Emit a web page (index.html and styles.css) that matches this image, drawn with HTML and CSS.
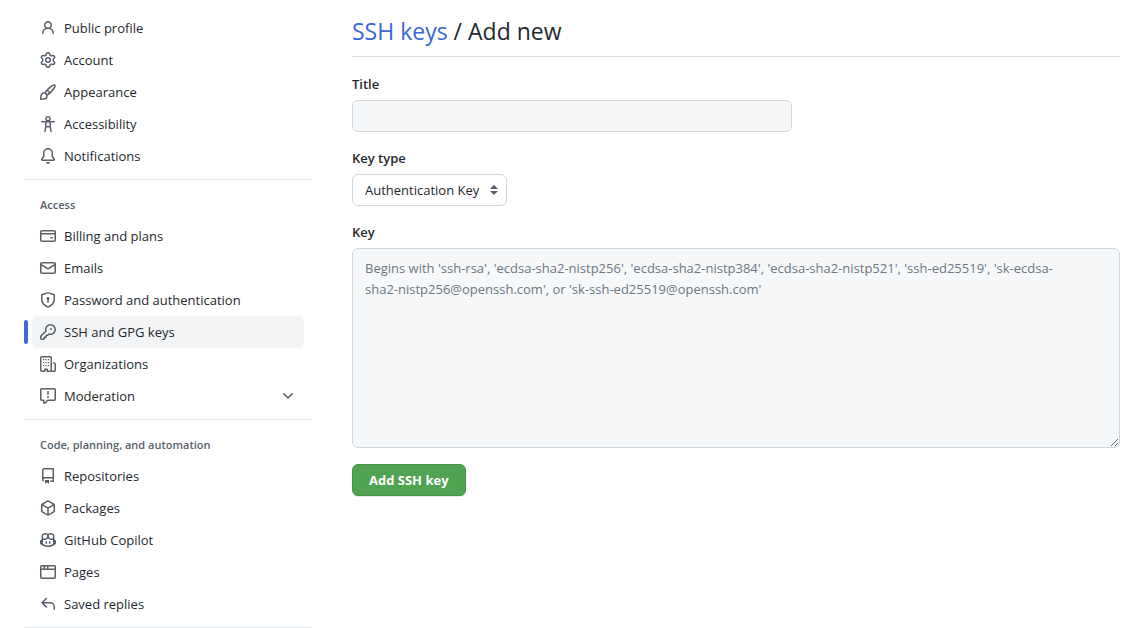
FILE: index.html
```html
<!DOCTYPE html>
<html lang="en">
<head>
    <meta charset="UTF-8">
    <meta name="viewport" content="width=device-width, initial-scale=1.0">
    <title>Add new SSH key</title>
    <link rel="stylesheet" href="styles.css">
</head>
<body>
    <div class="layout">
        <!-- Settings navigation -->
        <nav class="sidebar" aria-label="Settings">
            <ul class="nav-list">
                <li><a class="nav-item" href="#">
                    <svg class="icon" viewBox="0 0 16 16"><path d="M10.561 8.073a6.005 6.005 0 0 1 3.432 5.142.75.75 0 1 1-1.498.07 4.5 4.5 0 0 0-8.99 0 .75.75 0 0 1-1.498-.07 6.004 6.004 0 0 1 3.431-5.142 3.999 3.999 0 1 1 5.123 0ZM10.5 5a2.5 2.5 0 1 0-5 0 2.5 2.5 0 0 0 5 0Z"/></svg>
                    <span>Public profile</span>
                </a></li>
                <li><a class="nav-item" href="#">
                    <svg class="icon" viewBox="0 0 16 16"><path d="M8 0a8.2 8.2 0 0 1 .701.031C9.444.095 9.99.645 10.16 1.29l.288 1.107c.018.066.079.158.212.224.231.114.454.243.668.386.123.082.233.09.299.071l1.103-.303c.644-.176 1.392.021 1.82.63.27.385.506.792.704 1.218.315.675.111 1.422-.364 1.891l-.814.806c-.049.048-.098.147-.088.294.016.257.016.515 0 .772-.01.147.038.246.088.294l.814.806c.475.469.679 1.216.364 1.891a7.977 7.977 0 0 1-.704 1.217c-.428.61-1.176.807-1.82.63l-1.102-.302c-.067-.019-.177-.011-.3.071a5.909 5.909 0 0 1-.668.386c-.133.066-.194.158-.211.224l-.29 1.106c-.168.646-.715 1.196-1.458 1.26a8.006 8.006 0 0 1-1.402 0c-.743-.064-1.289-.614-1.458-1.26l-.289-1.106c-.018-.066-.079-.158-.212-.224a5.738 5.738 0 0 1-.668-.386c-.123-.082-.233-.09-.299-.071l-1.103.303c-.644.176-1.392-.021-1.82-.63a8.12 8.12 0 0 1-.704-1.218c-.315-.675-.111-1.422.363-1.891l.815-.806c.05-.048.098-.147.088-.294a6.214 6.214 0 0 1 0-.772c.01-.147-.038-.246-.088-.294l-.815-.806C.635 6.045.431 5.298.746 4.623a7.92 7.92 0 0 1 .704-1.217c.428-.61 1.176-.807 1.82-.63l1.102.302c.067.019.177.011.3-.071.214-.143.437-.272.668-.386.133-.066.194-.158.211-.224l.29-1.106C6.009.645 6.556.095 7.299.03 7.53.01 7.764 0 8 0Zm-.571 1.525c-.036.003-.108.036-.137.146l-.289 1.105c-.147.561-.549.967-.998 1.189-.173.086-.34.183-.5.29-.417.278-.97.423-1.529.27l-1.103-.303c-.109-.03-.175.016-.195.045-.22.312-.412.644-.573.99-.014.031-.021.11.059.19l.815.806c.411.406.562.957.53 1.456a4.709 4.709 0 0 0 0 .582c.032.499-.119 1.05-.53 1.456l-.815.806c-.081.08-.073.159-.059.19.162.346.353.677.573.989.02.03.085.076.195.046l1.102-.303c.56-.153 1.113-.008 1.53.27.161.107.328.204.501.29.447.222.85.629.997 1.189l.289 1.105c.029.109.101.143.137.146a6.6 6.6 0 0 0 1.142 0c.036-.003.108-.036.137-.146l.289-1.105c.147-.561.549-.967.998-1.189.173-.086.34-.183.5-.29.417-.278.97-.423 1.529-.27l1.103.303c.109.029.175-.016.195-.045.22-.313.411-.644.573-.99.014-.031.021-.11-.059-.19l-.815-.806c-.411-.406-.562-.957-.53-1.456a4.709 4.709 0 0 0 0-.582c-.032-.499.119-1.05.53-1.456l.815-.806c.081-.08.073-.159.059-.19a6.464 6.464 0 0 0-.573-.989c-.02-.03-.085-.076-.195-.046l-1.102.303c-.56.153-1.113.008-1.53-.27a4.44 4.44 0 0 0-.501-.29c-.447-.222-.85-.629-.997-1.189l-.289-1.105c-.029-.11-.101-.143-.137-.146a6.6 6.6 0 0 0-1.142 0ZM11 8a3 3 0 1 1-6 0 3 3 0 0 1 6 0ZM9.5 8a1.5 1.5 0 1 0-3.001.001A1.5 1.5 0 0 0 9.5 8Z"/></svg>
                    <span>Account</span>
                </a></li>
                <li><a class="nav-item" href="#">
                    <svg class="icon" viewBox="0 0 16 16"><path d="M11.134 1.535c.7-.509 1.416-.942 2.076-1.155.649-.21 1.463-.267 2.069.34.603.601.568 1.411.368 2.07-.202.668-.624 1.39-1.125 2.096-1.011 1.424-2.496 2.987-3.775 4.249-1.098 1.084-2.132 1.839-3.04 2.3a3.744 3.744 0 0 1-1.055 3.217c-.431.431-1.065.691-1.657.861-.614.177-1.294.287-1.914.357A21.151 21.151 0 0 1 .797 16H.743a.75.75 0 0 1-.742-.742v-.054a21.25 21.25 0 0 1 .13-2.284c.067-.647.187-1.287.358-1.914.17-.591.43-1.226.86-1.657a3.746 3.746 0 0 1 3.227-1.054c.466-.893 1.225-1.907 2.314-2.982 1.271-1.255 2.833-2.75 4.246-3.777ZM1.62 13.089c-.051.464-.086.929-.104 1.395.466-.018.932-.053 1.396-.104a10.511 10.511 0 0 0 1.668-.309c.526-.151.856-.325 1.011-.48a2.25 2.25 0 1 0-3.182-3.182c-.155.155-.329.485-.48 1.01a10.515 10.515 0 0 0-.309 1.67Zm10.396-10.34c-1.224.89-2.605 2.189-3.822 3.384l1.718 1.718c1.21-1.205 2.51-2.597 3.387-3.833.47-.662.78-1.227.912-1.662.134-.444.032-.551.009-.575h-.001V1.78c-.014-.014-.113-.113-.548.027-.432.14-.995.462-1.655.942Zm-4.832 7.266-.001.001a9.859 9.859 0 0 0 1.63-1.142L7.155 7.216a9.7 9.7 0 0 0-1.161 1.607c.482.302.889.71 1.19 1.192Z"/></svg>
                    <span>Appearance</span>
                </a></li>
                <li><a class="nav-item" href="#">
                    <svg class="icon icon-line" viewBox="0 0 16 16"><circle cx="8" cy="2.75" r="2"/><path d="M1.75 5.75h12.5M5.75 5.75v5L5 15.25M10.25 5.75v5l.75 4.5M6 10.75h4"/></svg>
                    <span>Accessibility</span>
                </a></li>
                <li><a class="nav-item" href="#">
                    <svg class="icon" viewBox="0 0 16 16"><path d="M8 16a2 2 0 0 0 1.985-1.75c.017-.137-.097-.25-.235-.25h-3.5c-.138 0-.252.113-.235.25A2 2 0 0 0 8 16ZM3 5a5 5 0 0 1 10 0v2.947c0 .05.015.098.042.139l1.703 2.555A1.519 1.519 0 0 1 13.482 13H2.518a1.516 1.516 0 0 1-1.263-2.36l1.703-2.554A.255.255 0 0 0 3 7.947Zm5-3.5A3.5 3.5 0 0 0 4.5 5v2.947c0 .346-.102.683-.294.97l-1.703 2.556a.017.017 0 0 0-.003.01l.001.006c0 .002.002.004.004.006l.006.004.007.001h10.964l.007-.001.006-.004.004-.006.001-.007a.017.017 0 0 0-.003-.01l-1.703-2.554a1.745 1.745 0 0 1-.294-.97V5A3.5 3.5 0 0 0 8 1.5Z"/></svg>
                    <span>Notifications</span>
                </a></li>
            </ul>

            <h2 class="nav-heading">Access</h2>
            <ul class="nav-list">
                <li><a class="nav-item" href="#">
                    <svg class="icon" viewBox="0 0 16 16"><path d="M10.75 9a.75.75 0 0 0 0 1.5h1.5a.75.75 0 0 0 0-1.5h-1.5Z"/><path d="M0 3.75C0 2.784.784 2 1.75 2h12.5c.966 0 1.75.784 1.75 1.75v8.5A1.75 1.75 0 0 1 14.25 14H1.75A1.75 1.75 0 0 1 0 12.25ZM14.5 6.5h-13v5.75c0 .138.112.25.25.25h12.5a.25.25 0 0 0 .25-.25Zm0-2.75a.25.25 0 0 0-.25-.25H1.75a.25.25 0 0 0-.25.25V5h13Z"/></svg>
                    <span>Billing and plans</span>
                </a></li>
                <li><a class="nav-item" href="#">
                    <svg class="icon" viewBox="0 0 16 16"><path d="M1.75 2h12.5c.966 0 1.75.784 1.75 1.75v8.5A1.75 1.75 0 0 1 14.25 14H1.75A1.75 1.75 0 0 1 0 12.25v-8.5C0 2.784.784 2 1.75 2ZM1.5 12.251c0 .138.112.25.25.25h12.5a.25.25 0 0 0 .25-.25V5.809L8.38 9.397a.75.75 0 0 1-.76 0L1.5 5.809v6.442Zm13-8.181v-.32a.25.25 0 0 0-.25-.25H1.75a.25.25 0 0 0-.25.25v.32L8 7.88Z"/></svg>
                    <span>Emails</span>
                </a></li>
                <li><a class="nav-item" href="#">
                    <svg class="icon" viewBox="0 0 16 16"><path d="m8.533.133 5.25 1.68A1.75 1.75 0 0 1 15 3.48V7c0 1.566-.32 3.182-1.303 4.682-.983 1.498-2.585 2.813-5.032 3.855a1.697 1.697 0 0 1-1.33 0c-2.447-1.042-4.049-2.357-5.032-3.855C1.32 10.182 1 8.566 1 7V3.48a1.75 1.75 0 0 1 1.217-1.667l5.25-1.68a1.748 1.748 0 0 1 1.066 0Zm-.61 1.429.001.001-5.25 1.68a.251.251 0 0 0-.174.237V7c0 1.36.275 2.666 1.057 3.859.784 1.194 2.121 2.342 4.366 3.298a.196.196 0 0 0 .154 0c2.245-.957 3.582-2.103 4.366-3.297C13.225 9.666 13.5 8.358 13.5 7V3.48a.25.25 0 0 0-.174-.238l-5.25-1.68a.25.25 0 0 0-.153 0ZM9.5 6.5c0 .536-.286 1.032-.75 1.3v2.45a.75.75 0 0 1-1.5 0V7.8A1.5 1.5 0 1 1 9.5 6.5Z"/></svg>
                    <span>Password and authentication</span>
                </a></li>
                <li><a class="nav-item active" href="#" aria-current="page">
                    <svg class="icon" viewBox="0 0 16 16"><path d="M10.5 0a5.499 5.499 0 1 1-1.288 10.848l-.932.932a.749.749 0 0 1-.53.22H7v.75a.749.749 0 0 1-.22.53l-.5.5a.749.749 0 0 1-.53.22H5v.75a.749.749 0 0 1-.22.53l-.5.5a.749.749 0 0 1-.53.22h-2A1.75 1.75 0 0 1 0 14.25v-2c0-.199.079-.389.22-.53l4.932-4.932A5.5 5.5 0 0 1 10.5 0Zm-4 5.5c-.001.431.069.86.205 1.269a.75.75 0 0 1-.181.768L1.5 12.56v1.69c0 .138.112.25.25.25h1.69l.06-.06v-1.19a.75.75 0 0 1 .75-.75h1.19l.06-.06v-1.19a.75.75 0 0 1 .75-.75h1.19l1.023-1.025a.75.75 0 0 1 .768-.18A4 4 0 1 0 6.5 5.5ZM11 6a1 1 0 1 1 0-2 1 1 0 0 1 0 2Z"/></svg>
                    <span>SSH and GPG keys</span>
                </a></li>
                <li><a class="nav-item" href="#">
                    <svg class="icon" viewBox="0 0 16 16"><path d="M1.75 16A1.75 1.75 0 0 1 0 14.25V1.75C0 .784.784 0 1.75 0h8.5C11.216 0 12 .784 12 1.75v12.5c0 .085-.006.168-.018.25h2.268a.25.25 0 0 0 .25-.25V8.285a.25.25 0 0 0-.111-.208l-1.055-.703a.749.749 0 1 1 .832-1.248l1.055.703c.487.325.779.871.779 1.456v5.965A1.75 1.75 0 0 1 14.25 16h-3.5a.766.766 0 0 1-.197-.026c-.099.017-.2.026-.303.026h-3a.75.75 0 0 1-.75-.75V14h-1v1.25a.75.75 0 0 1-.75.75Zm-.25-1.75c0 .138.112.25.25.25H4v-1.25a.75.75 0 0 1 .75-.75h2.5a.75.75 0 0 1 .75.75v1.25h2.25a.25.25 0 0 0 .25-.25V1.75a.25.25 0 0 0-.25-.25h-8.5a.25.25 0 0 0-.25.25Z"/><path d="M3 3h1.25v1.25H3ZM5.4 3h1.25v1.25H5.4ZM7.8 3h1.25v1.25H7.8ZM3 6h1.25v1.25H3ZM5.4 6h1.25v1.25H5.4ZM7.8 6h1.25v1.25H7.8ZM3 9h1.25v1.25H3ZM5.4 9h1.25v1.25H5.4ZM7.8 9h1.25v1.25H7.8Z"/></svg>
                    <span>Organizations</span>
                </a></li>
                <li><button class="nav-item" type="button" aria-expanded="false">
                    <svg class="icon" viewBox="0 0 16 16"><path d="M0 1.75C0 .784.784 0 1.75 0h12.5C15.216 0 16 .784 16 1.75v9.5A1.75 1.75 0 0 1 14.25 13H8.06l-2.573 2.573A1.458 1.458 0 0 1 3 14.543V13H1.75A1.75 1.75 0 0 1 0 11.25Zm1.75-.25a.25.25 0 0 0-.25.25v9.5c0 .138.112.25.25.25h2a.75.75 0 0 1 .75.75v2.19l2.72-2.72a.749.749 0 0 1 .53-.22h6.5a.25.25 0 0 0 .25-.25v-9.5a.25.25 0 0 0-.25-.25Zm7 2.25v2.5a.75.75 0 0 1-1.5 0v-2.5a.75.75 0 0 1 1.5 0ZM9 9a1 1 0 1 1-2 0 1 1 0 0 1 2 0Z"/></svg>
                    <span>Moderation</span>
                    <svg class="icon chevron" viewBox="0 0 16 16"><path d="M12.78 5.22a.749.749 0 0 1 0 1.06l-4.25 4.25a.749.749 0 0 1-1.06 0L3.22 6.28a.749.749 0 1 1 1.06-1.06L8 8.939l3.72-3.719a.749.749 0 0 1 1.06 0Z"/></svg>
                </button></li>
            </ul>

            <h2 class="nav-heading">Code, planning, and automation</h2>
            <ul class="nav-list">
                <li><a class="nav-item" href="#">
                    <svg class="icon" viewBox="0 0 16 16"><path d="M2 2.5A2.5 2.5 0 0 1 4.5 0h8.75a.75.75 0 0 1 .75.75v12.5a.75.75 0 0 1-.75.75h-2.5a.75.75 0 0 1 0-1.5h1.75v-2h-8a1 1 0 0 0-.714 1.7.75.75 0 1 1-1.072 1.05A2.495 2.495 0 0 1 2 11.5Zm10.5-1h-8a1 1 0 0 0-1 1v6.708A2.486 2.486 0 0 1 4.5 9h8ZM5 12.25a.25.25 0 0 1 .25-.25h3.5a.25.25 0 0 1 .25.25v3.25a.25.25 0 0 1-.4.2l-1.45-1.087a.249.249 0 0 0-.3 0L5.4 15.7a.25.25 0 0 1-.4-.2Z"/></svg>
                    <span>Repositories</span>
                </a></li>
                <li><a class="nav-item" href="#">
                    <svg class="icon" viewBox="0 0 16 16"><path d="m8.878.392 5.25 3.045c.54.314.872.89.872 1.514v6.098a1.75 1.75 0 0 1-.872 1.514l-5.25 3.045a1.75 1.75 0 0 1-1.756 0l-5.25-3.045A1.75 1.75 0 0 1 1 11.049V4.951c0-.624.332-1.201.872-1.514L7.122.392a1.75 1.75 0 0 1 1.756 0ZM7.875 1.69l-4.63 2.685L8 7.133l4.755-2.758-4.63-2.685a.248.248 0 0 0-.25 0ZM2.5 5.677v5.372c0 .09.047.171.125.216l4.625 2.683V8.432Zm6.25 8.271 4.625-2.683a.25.25 0 0 0 .125-.216V5.677L8.75 8.432Z"/></svg>
                    <span>Packages</span>
                </a></li>
                <li><a class="nav-item" href="#">
                    <svg class="icon" viewBox="0 0 16 16"><path d="M7.998 15.035c-4.562 0-7.873-2.914-7.998-3.749V9.338c.085-.628.677-1.686 1.588-2.065.013-.07.024-.143.036-.218.029-.183.06-.384.126-.612-.201-.508-.254-1.084-.254-1.656 0-.87.128-1.769.693-2.484.579-.733 1.494-1.124 2.724-1.261 1.206-.134 2.262.034 2.944.765.05.053.096.108.139.165.044-.057.094-.112.143-.165.682-.731 1.738-.899 2.944-.765 1.23.137 2.145.528 2.724 1.261.566.715.693 1.614.693 2.484 0 .572-.053 1.148-.254 1.656.066.228.098.429.126.612.012.076.024.148.037.218.924.385 1.522 1.471 1.591 2.095v1.872c0 .766-3.351 3.795-8.002 3.795Zm0-1.485c2.28 0 4.584-1.11 5.002-1.433V7.862l-.023-.116c-.49.21-1.075.291-1.727.291-1.146 0-2.059-.327-2.71-.991A3.222 3.222 0 0 1 8 6.303a3.24 3.24 0 0 1-.544.743c-.65.664-1.563.991-2.71.991-.652 0-1.236-.081-1.727-.291l-.023.116v4.255c.419.323 2.722 1.433 5.002 1.433ZM6.762 2.83c-.193-.206-.637-.413-1.682-.297-1.019.113-1.479.404-1.713.7-.247.312-.369.789-.369 1.554 0 .793.129 1.171.308 1.371.162.181.519.379 1.442.379.853 0 1.339-.235 1.638-.54.315-.322.527-.827.617-1.553.117-.935-.037-1.395-.241-1.614Zm4.155-.297c-1.044-.116-1.488.091-1.681.297-.204.219-.359.679-.242 1.614.091.726.303 1.231.618 1.553.299.305.784.54 1.638.54.922 0 1.28-.198 1.442-.379.179-.2.308-.578.308-1.371 0-.765-.123-1.242-.37-1.554-.233-.296-.693-.587-1.713-.7Z"/><path d="M6.25 9.037a.75.75 0 0 1 .75.75v1.501a.75.75 0 0 1-1.5 0V9.787a.75.75 0 0 1 .75-.75Zm4.25.75v1.501a.75.75 0 0 1-1.5 0V9.787a.75.75 0 0 1 1.5 0Z"/></svg>
                    <span>GitHub Copilot</span>
                </a></li>
                <li><a class="nav-item" href="#">
                    <svg class="icon" viewBox="0 0 16 16"><path d="M0 2.75C0 1.784.784 1 1.75 1h12.5c.966 0 1.75.784 1.75 1.75v10.5A1.75 1.75 0 0 1 14.25 15H1.75A1.75 1.75 0 0 1 0 13.25ZM14.5 6h-13v7.25c0 .138.112.25.25.25h12.5a.25.25 0 0 0 .25-.25Zm-6-3.5v2h6V2.75a.25.25 0 0 0-.25-.25ZM5 2.5v2h2v-2Zm-3.25 0a.25.25 0 0 0-.25.25V4.5h2v-2Z"/></svg>
                    <span>Pages</span>
                </a></li>
                <li><a class="nav-item" href="#">
                    <svg class="icon" viewBox="0 0 16 16"><path d="M6.78 1.97a.75.75 0 0 1 0 1.06L3.81 6h6.44A4.75 4.75 0 0 1 15 10.75v2.5a.75.75 0 0 1-1.5 0v-2.5a3.25 3.25 0 0 0-3.25-3.25H3.81l2.97 2.97a.749.749 0 1 1-1.06 1.06L1.47 7.28a.75.75 0 0 1 0-1.06l4.25-4.25a.75.75 0 0 1 1.06 0Z"/></svg>
                    <span>Saved replies</span>
                </a></li>
            </ul>
        </nav>

        <!-- New key form -->
        <main class="content">
            <h1 class="page-title"><a href="#">SSH keys</a> / Add new</h1>

            <form class="key-form">
                <div class="field">
                    <label for="keyTitle">Title</label>
                    <input type="text" id="keyTitle" class="control text-input">
                </div>
                <div class="field">
                    <label for="keyType">Key type</label>
                    <div class="select-wrap">
                        <select id="keyType" class="control">
                            <option>Authentication Key</option>
                            <option>Signing Key</option>
                        </select>
                        <svg class="select-arrows" viewBox="0 0 16 16"><path d="m4.427 9.427 3.396 3.396a.251.251 0 0 0 .354 0l3.396-3.396A.25.25 0 0 0 11.396 9H4.604a.25.25 0 0 0-.177.427ZM4.423 6.47 7.82 3.072a.25.25 0 0 1 .354 0L11.57 6.47a.25.25 0 0 1-.177.427H4.6a.25.25 0 0 1-.177-.427Z"/></svg>
                    </div>
                </div>
                <div class="field">
                    <label for="keyBody">Key</label>
                    <textarea id="keyBody" class="control" placeholder="Begins with 'ssh-rsa', 'ecdsa-sha2-nistp256', 'ecdsa-sha2-nistp384', 'ecdsa-sha2-nistp521', 'ssh-ed25519', 'sk-ecdsa-sha2-nistp256@openssh.com', or 'sk-ssh-ed25519@openssh.com'"></textarea>
                </div>
                <button type="submit" class="btn-primary">Add SSH key</button>
            </form>
        </main>
    </div>
</body>
</html>
```
FILE: styles.css
```css
* {
    box-sizing: border-box;
}

body {
    margin: 0;
    font-family: 'Segoe UI', 'Open Sans', 'Noto Sans', sans-serif;
    font-size: 13px;
    line-height: 20px;
    color: #24292f;
    background-color: #fff;
}

.layout {
    display: grid;
    grid-template-columns: 288px 1fr;
    gap: 40px;
    padding: 0 11px 0 24px;
}

/* Sidebar */
.sidebar {
    padding-top: 4px;
}

.nav-list {
    list-style: none;
    margin: 0;
    padding: 8px 8px 7px;
    border-bottom: 1px solid #e6e9ed;
}

.nav-heading {
    margin: 0;
    padding: 15px 16px 0;
    font-size: 11px;
    font-weight: 600;
    line-height: 20px;
    color: #57606a;
}

.nav-heading + .nav-list {
    padding-top: 5px;
}

.nav-item {
    display: flex;
    align-items: center;
    gap: 8px;
    width: 100%;
    height: 32px;
    padding: 0 8px;
    border: none;
    border-radius: 6px;
    background: none;
    font: inherit;
    color: #24292f;
    text-decoration: none;
    cursor: pointer;
}

.nav-item:hover,
.nav-item.active {
    background-color: #f3f4f6;
}

.nav-item.active {
    position: relative;
}

.nav-item.active::before {
    content: '';
    position: absolute;
    top: 4px;
    left: -8px;
    width: 4px;
    height: 24px;
    border-radius: 6px;
    background-color: #3b6bd6;
}

.icon {
    flex: none;
    width: 16px;
    height: 16px;
    fill: #57606a;
}

.icon-line {
    fill: none;
    stroke: #57606a;
    stroke-width: 1.5;
    stroke-linecap: round;
    stroke-linejoin: round;
}

.chevron {
    margin-left: auto;
}

/* Form */
.content {
    min-width: 0;
    padding-top: 15px;
}

.page-title {
    margin: 0;
    padding-bottom: 9px;
    border-bottom: 1px solid #d8dee4;
    font-size: 23px;
    font-weight: 400;
    line-height: 32px;
}

.page-title a {
    color: #3b67d6;
    text-decoration: none;
}

.page-title a:hover {
    text-decoration: underline;
}

.key-form {
    padding-top: 17px;
}

.field {
    display: flex;
    flex-direction: column;
    align-items: flex-start;
    gap: 6px;
    margin-bottom: 16px;
}

label {
    font-weight: 600;
}

.control {
    display: block;
    padding: 5px 12px;
    border: 1px solid #d0d7de;
    border-radius: 6px;
    background-color: #f6f8fa;
    font: inherit;
    color: #24292f;
}

.control:focus {
    border-color: #3b6bd6;
    outline: none;
}

.text-input {
    width: 440px;
    max-width: 100%;
    height: 32px;
}

.select-wrap {
    position: relative;
}

select.control {
    height: 32px;
    padding-right: 26px;
    background-color: #fff;
    appearance: none;
}

.select-arrows {
    position: absolute;
    top: 8px;
    right: 5px;
    width: 16px;
    height: 16px;
    fill: #57606a;
    pointer-events: none;
}

textarea.control {
    width: 100%;
    height: 200px;
    padding: 9px 36px 9px 12px;
    line-height: 21px;
    resize: vertical;
}

textarea::placeholder {
    color: #6e7781;
}

.btn-primary {
    height: 32px;
    padding: 0 16px;
    border: 1px solid #46944a;
    border-radius: 6px;
    background-color: #4fa352;
    box-shadow: 0 1px 0 rgba(27, 31, 36, 0.1);
    font: inherit;
    font-weight: 700;
    color: #fff;
    cursor: pointer;
}

.btn-primary:hover {
    background-color: #46944a;
}
```
